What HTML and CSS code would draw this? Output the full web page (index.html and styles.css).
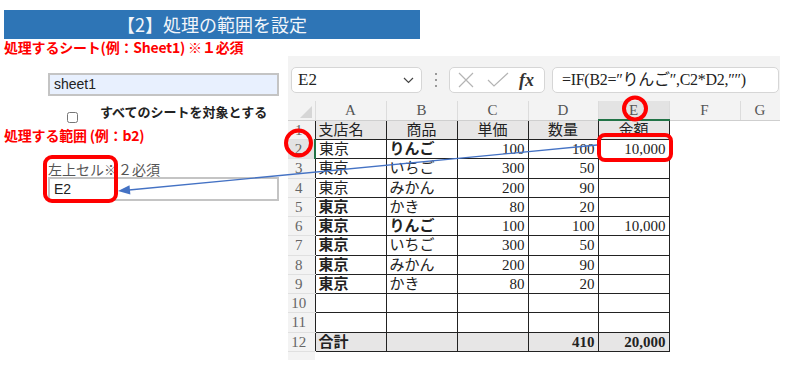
FILE: index.html
```html
<!DOCTYPE html>
<html>
<head>
  <meta charset="utf-8">
  <title>処理の範囲を設定</title>
  <link rel="stylesheet" href="styles.css">
</head>
<body>

  <div class="title">【2】処理の範囲を設定</div>
  <div class="req">処理するシート(例：Sheet1) ※１必須</div>

  <div class="main">

    <div class="form">
      <div class="field autofill">sheet1</div>

      <label class="check">
        <input type="checkbox">
        <span>すべてのシートを対象とする</span>
      </label>

      <div class="req second">処理する範囲 (例：b2)</div>

      <div class="hint">左上セル※２必須</div>
      <div class="field">E2</div>
    </div>

    <div class="excel">

      <div class="fbar">
        <div class="namebox">
          <span>E2</span>
          <svg width="11" height="7" viewBox="0 0 11 7"><path d="M1 1 L5.5 5.5 L10 1" fill="none" stroke="#444" stroke-width="1.2"/></svg>
        </div>

        <div class="grip"><i></i><i></i><i></i></div>

        <div class="tools">
          <svg width="16" height="16" viewBox="0 0 16 16"><path d="M1 1 L15 15 M15 1 L1 15" stroke="#b4b4b4" stroke-width="1.2"/></svg>
          <svg width="22" height="16" viewBox="0 0 22 16"><path d="M1 8 L7 14 L21 1" fill="none" stroke="#b4b4b4" stroke-width="1.2"/></svg>
          <i class="fx">fx</i>
        </div>

        <div class="formula">=IF(B2=″りんご″,C2*D2,″″)</div>
      </div>

      <table class="sheet">
        <colgroup>
          <col class="w-rn">
          <col class="w-c">
          <col class="w-c">
          <col class="w-c">
          <col class="w-d">
          <col class="w-c">
          <col class="w-c">
          <col class="w-g">
        </colgroup>

        <tr class="colhead">
          <th class="corner"><div class="tri"></div></th>
          <th>A</th><th>B</th><th>C</th><th>D</th><th class="sel">E</th><th>F</th><th>G</th>
        </tr>

        <tr class="head">
          <th class="rn">1</th>
          <td>支店名</td><td class="c">商品</td><td class="c">単価</td><td class="c">数量</td><td class="c">金額</td>
          <td class="out"></td><td class="out"></td>
        </tr>
        <tr>
          <th class="rn sel">2</th>
          <td>東京</td><td class="b">りんご</td><td class="n">100</td><td class="n">100</td><td class="n">10,000</td>
          <td class="out"></td><td class="out"></td>
        </tr>
        <tr>
          <th class="rn">3</th>
          <td>東京</td><td>いちご</td><td class="n">300</td><td class="n">50</td><td></td>
          <td class="out"></td><td class="out"></td>
        </tr>
        <tr>
          <th class="rn">4</th>
          <td>東京</td><td>みかん</td><td class="n">200</td><td class="n">90</td><td></td>
          <td class="out"></td><td class="out"></td>
        </tr>
        <tr>
          <th class="rn">5</th>
          <td class="b">東京</td><td>かき</td><td class="n">80</td><td class="n">20</td><td></td>
          <td class="out"></td><td class="out"></td>
        </tr>
        <tr>
          <th class="rn">6</th>
          <td class="b">東京</td><td class="b">りんご</td><td class="n">100</td><td class="n">100</td><td class="n">10,000</td>
          <td class="out"></td><td class="out"></td>
        </tr>
        <tr>
          <th class="rn">7</th>
          <td class="b">東京</td><td>いちご</td><td class="n">300</td><td class="n">50</td><td></td>
          <td class="out"></td><td class="out"></td>
        </tr>
        <tr>
          <th class="rn">8</th>
          <td class="b">東京</td><td>みかん</td><td class="n">200</td><td class="n">90</td><td></td>
          <td class="out"></td><td class="out"></td>
        </tr>
        <tr>
          <th class="rn">9</th>
          <td class="b">東京</td><td>かき</td><td class="n">80</td><td class="n">20</td><td></td>
          <td class="out"></td><td class="out"></td>
        </tr>
        <tr>
          <th class="rn">10</th>
          <td></td><td></td><td></td><td></td><td></td>
          <td class="out"></td><td class="out"></td>
        </tr>
        <tr>
          <th class="rn">11</th>
          <td></td><td></td><td></td><td></td><td></td>
          <td class="out"></td><td class="out"></td>
        </tr>
        <tr class="total">
          <th class="rn">12</th>
          <td class="b">合計</td><td></td><td></td><td class="n b">410</td><td class="n b">20,000</td>
          <td class="out"></td><td class="out"></td>
        </tr>
        <tr class="filler">
          <th class="rn"></th>
          <td class="out"></td><td class="out"></td><td class="out"></td><td class="out"></td><td class="out"></td>
          <td class="out"></td><td class="out"></td>
        </tr>
      </table>
    </div>
  </div>

  <!-- annotations drawn over the screenshot -->
  <svg class="marks" width="787" height="365" viewBox="0 0 787 365">
    <line x1="597" y1="145" x2="129" y2="190" stroke="#4472c4" stroke-width="1.3"/>
    <polygon points="118,191 130.4,194.6 129.5,185.2" fill="#4472c4"/>
    <circle cx="298.5" cy="143" r="12.5" fill="none" stroke="#f00" stroke-width="4"/>
    <circle cx="635" cy="108.5" r="11" fill="none" stroke="#f00" stroke-width="4"/>
    <rect x="599" y="135" width="72" height="25" rx="6" fill="none" stroke="#f00" stroke-width="4"/>
    <rect x="45" y="157" width="71" height="44" rx="7" fill="none" stroke="#f00" stroke-width="4"/>
  </svg>

</body>
</html>
```

FILE: styles.css
```css
* {
  box-sizing: border-box;
}

html, body {
  margin: 0;
  padding: 0;
}

body {
  position: relative;
  width: 787px;
  height: 365px;
  overflow: hidden;
  background: #fff;
  font-family: "Noto Sans CJK JP", sans-serif;
  color: #222;
}

.title {
  margin: 10px 0 0 4px;
  width: 416px;
  height: 29px;
  background: #2e75b6;
  color: #f2f5fa;
  font-size: 18px;
  line-height: 29px;
  text-align: center;
}

.req {
  margin-left: 4px;
  height: 17px;
  color: #f00;
  font-weight: bold;
  font-size: 14px;
  line-height: 17px;
  letter-spacing: -0.2px;
}

.req.second {
  margin-top: 3px;
}

.main {
  display: flex;
}

/* left form */

.form {
  width: 288px;
  padding-top: 17px;
}

.field {
  margin-left: 48px;
  width: 231px;
  height: 24px;
  border: 2px solid #c4c4c4;
  padding-left: 4px;
  font: 14px "Liberation Sans", sans-serif;
  line-height: 20px;
  color: #222;
  background: #fff;
}

.field.autofill {
  height: 23px;
  line-height: 19px;
  background: #e8f0fe;
}

.check {
  display: flex;
  align-items: flex-start;
  margin: 8px 0 0 67px;
  height: 20px;
}

.check input {
  width: 11px;
  height: 11px;
  margin: 8px 0 0 0;
}

.check span {
  margin-left: 22px;
  font-size: 13px;
  font-weight: bold;
  line-height: 16px;
  color: #222;
}

.hint {
  margin: 17px 0 0 48px;
  height: 16px;
  font-size: 14px;
  line-height: 16px;
  color: #555;
}

/* spreadsheet screenshot */

.excel {
  width: 492px;
  height: 304px;
  overflow: hidden;
  background: #fff;
}

.fbar {
  display: flex;
  align-items: flex-start;
  height: 45px;
  padding: 11px 0 0 3px;
  background: #f3f3f3;
}

.namebox, .tools, .formula {
  height: 26px;
  background: #fff;
  border: 1px solid #d6d6d6;
  border-radius: 5px;
}

.namebox {
  display: flex;
  align-items: center;
  justify-content: space-between;
  width: 131px;
  padding: 0 7px 0 6px;
  font: 17px "Liberation Serif", serif;
}

.grip {
  display: flex;
  flex-direction: column;
  gap: 4px;
  width: 2px;
  margin: 6px 12px 0 13px;
}

.grip i {
  width: 2px;
  height: 2px;
  background: #999;
}

.tools {
  display: flex;
  align-items: center;
  gap: 13px;
  width: 96px;
  padding-left: 8px;
}

.fx {
  font: italic bold 18px "Liberation Serif", serif;
  color: #333;
  margin-left: -3px;
}

.formula {
  flex: 1;
  margin: 0 1px 0 7px;
  padding-left: 9px;
  font: 16px "Liberation Serif", "Noto Sans CJK JP", serif;
  line-height: 24px;
  letter-spacing: -0.3px;
  color: #222;
}

.sheet {
  border-collapse: collapse;
  table-layout: fixed;
  width: 492px;
  font: 15px "Liberation Serif", "Noto Sans CJK JP", serif;
}

.w-rn { width: 27px; }
.w-c { width: 71px; }
.w-d { width: 70px; }
.w-g { width: 40px; }

.sheet tr {
  height: 19.25px;
}

.sheet th, .sheet td {
  padding: 0 3px;
  line-height: 16px;
  white-space: nowrap;
  overflow: hidden;
}

.colhead th {
  height: 19px;
  background: #f3f3f3;
  color: #555;
  font-weight: normal;
  text-align: center;
  border-right: 1px solid #dcdcdc;
  border-bottom: 1px solid #cfcfcf;
}

.colhead th.sel {
  background: #e3e3e3;
  border-bottom: 2px solid #217346;
}

.corner .tri {
  width: 0;
  height: 0;
  margin: 3px 0 0 auto;
  border-left: 12px solid transparent;
  border-bottom: 12px solid #d6d6d6;
}

.rn {
  background: #f3f3f3;
  color: #666;
  font-weight: normal;
  text-align: center;
  padding-right: 8px !important;
  border-bottom: 1px solid #e0e0e0;
}

.rn.sel {
  background: #e3e3e3;
  border-right: 2px solid #217346;
}

.sheet td {
  border: 1px solid #222;
  text-align: left;
}

.sheet td.c {
  text-align: center;
}

.sheet td.n {
  text-align: right;
}

.sheet td.b {
  font-weight: bold;
}

.sheet td.out {
  border: none;
  background: #fff;
}

.head td, .total td {
  background: #e7e6e6;
}

.total td.out {
  background: #fff;
}

.sheet tr.filler {
  height: 9px;
}

.marks {
  position: absolute;
  top: 0;
  left: 0;
  pointer-events: none;
}
```
